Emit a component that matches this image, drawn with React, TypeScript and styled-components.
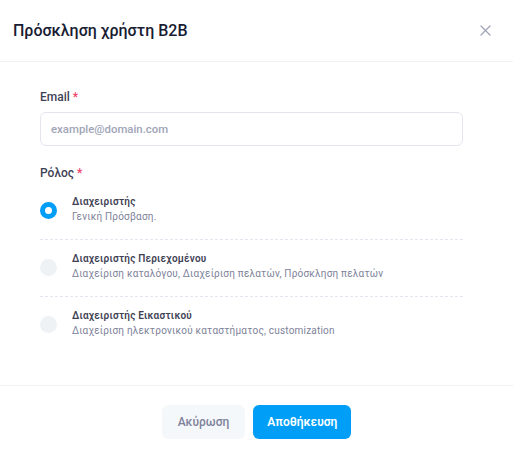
import styled, { createGlobalStyle } from "styled-components";

const GlobalStyle = createGlobalStyle`
  body {
    margin: 0;
    background: #ffffff;
    font-family: Roboto, "Noto Sans", sans-serif;
  }
`;

const Modal = styled.div`
  width: 513px;
  background: #ffffff;
`;

const Header = styled.div`
  display: flex;
  align-items: center;
  justify-content: space-between;
  height: 61px;
  padding: 0 22px 0 13px;
  border-bottom: 1px solid #eff2f5;

  h2 {
    margin: 0;
    font-size: 16px;
    font-weight: 500;
    color: #181c32;
  }
`;

const CloseButton = styled.button`
  display: flex;
  border: 0;
  background: none;
  padding: 0;
  cursor: pointer;
`;

const Body = styled.div`
  padding: 26px 50px 32px 40px;
`;

const Label = styled.label`
  display: block;
  font-size: 12px;
  font-weight: 500;
  line-height: 19px;
  color: #3f4254;
  margin-bottom: 5px;

  span {
    color: #f1416c;
    margin-left: 3px;
  }
`;

const Input = styled.input`
  box-sizing: border-box;
  width: 100%;
  height: 34px;
  padding: 0 10px;
  border: 1px solid #e4e6ef;
  border-radius: 6px;
  font-family: inherit;
  font-size: 11.4px;
  font-weight: 500;
  color: #3f4254;
  margin-bottom: 18px;

  &::placeholder {
    color: #a1a5b7;
  }
`;

const Options = styled.div`
  margin-top: -5px;
`;

const Option = styled.label`
  display: flex;
  align-items: center;
  gap: 15px;
  padding: 11px 0 15px;
  cursor: pointer;

  & + & {
    border-top: 1px dashed #e4e6ef;
  }
`;

const Radio = styled.span<{ $checked: boolean }>`
  box-sizing: border-box;
  flex: none;
  width: 17px;
  height: 17px;
  border-radius: 50%;
  background: ${(p) => (p.$checked ? "#ffffff" : "#eff2f5")};
  border: ${(p) => (p.$checked ? "5px solid #009ef7" : "none")};
  margin-top: 2px;
`;

const OptionText = styled.div`
  display: flex;
  flex-direction: column;

  strong {
    font-size: 10px;
    font-weight: 600;
    line-height: 15px;
    letter-spacing: 0.2px;
    color: #3f4254;
  }

  small {
    font-size: 10px;
    font-weight: 400;
    line-height: 15px;
    letter-spacing: 0.2px;
    color: #7e8299;
  }
`;

const Footer = styled.div`
  display: flex;
  justify-content: center;
  gap: 8px;
  padding: 19px 0 15px;
  border-top: 1px solid #eff2f5;
`;

const Button = styled.button<{ $primary?: boolean }>`
  height: 34px;
  padding: 0 ${(p) => (p.$primary ? "14px" : "16px")};
  border: 0;
  border-radius: 6px;
  font-family: inherit;
  font-size: 12px;
  font-weight: ${(p) => (p.$primary ? 600 : 500)};
  background: ${(p) => (p.$primary ? "#009ef7" : "#f5f8fa")};
  color: ${(p) => (p.$primary ? "#ffffff" : "#7e8299")};
  cursor: pointer;
`;

const roles = [
  { title: "Διαχειριστής", desc: "Γενική Πρόσβαση.", checked: true },
  {
    title: "Διαχειριστής Περιεχομένου",
    desc: "Διαχείριση καταλόγου, Διαχείριση πελατών, Πρόσκληση πελατών",
    checked: false,
  },
  {
    title: "Διαχειριστής Εικαστικού",
    desc: "Διαχείριση ηλεκτρονικού καταστήματος, customization",
    checked: false,
  },
];

const App: React.FC = () => {
  return (
    <>
      <GlobalStyle />
      <Modal>
        <Header>
          <h2>Πρόσκληση χρήστη B2B</h2>
          <CloseButton aria-label="close">
            <svg width="11" height="11" viewBox="0 0 11 11">
              <path
                d="M1 1L10 10M10 1L1 10"
                stroke="#a1a5b7"
                strokeWidth="1.3"
                strokeLinecap="round"
              />
            </svg>
          </CloseButton>
        </Header>
        <Body>
          <Label>
            Email<span>*</span>
          </Label>
          <Input placeholder="example@domain.com" />
          <Label>
            Ρόλος<span>*</span>
          </Label>
          <Options>
            {roles.map((r) => (
              <Option key={r.title}>
                <Radio $checked={r.checked} />
                <OptionText>
                  <strong>{r.title}</strong>
                  <small>{r.desc}</small>
                </OptionText>
              </Option>
            ))}
          </Options>
        </Body>
        <Footer>
          <Button>Ακύρωση</Button>
          <Button $primary>Αποθήκευση</Button>
        </Footer>
      </Modal>
    </>
  );
};

export default App;
